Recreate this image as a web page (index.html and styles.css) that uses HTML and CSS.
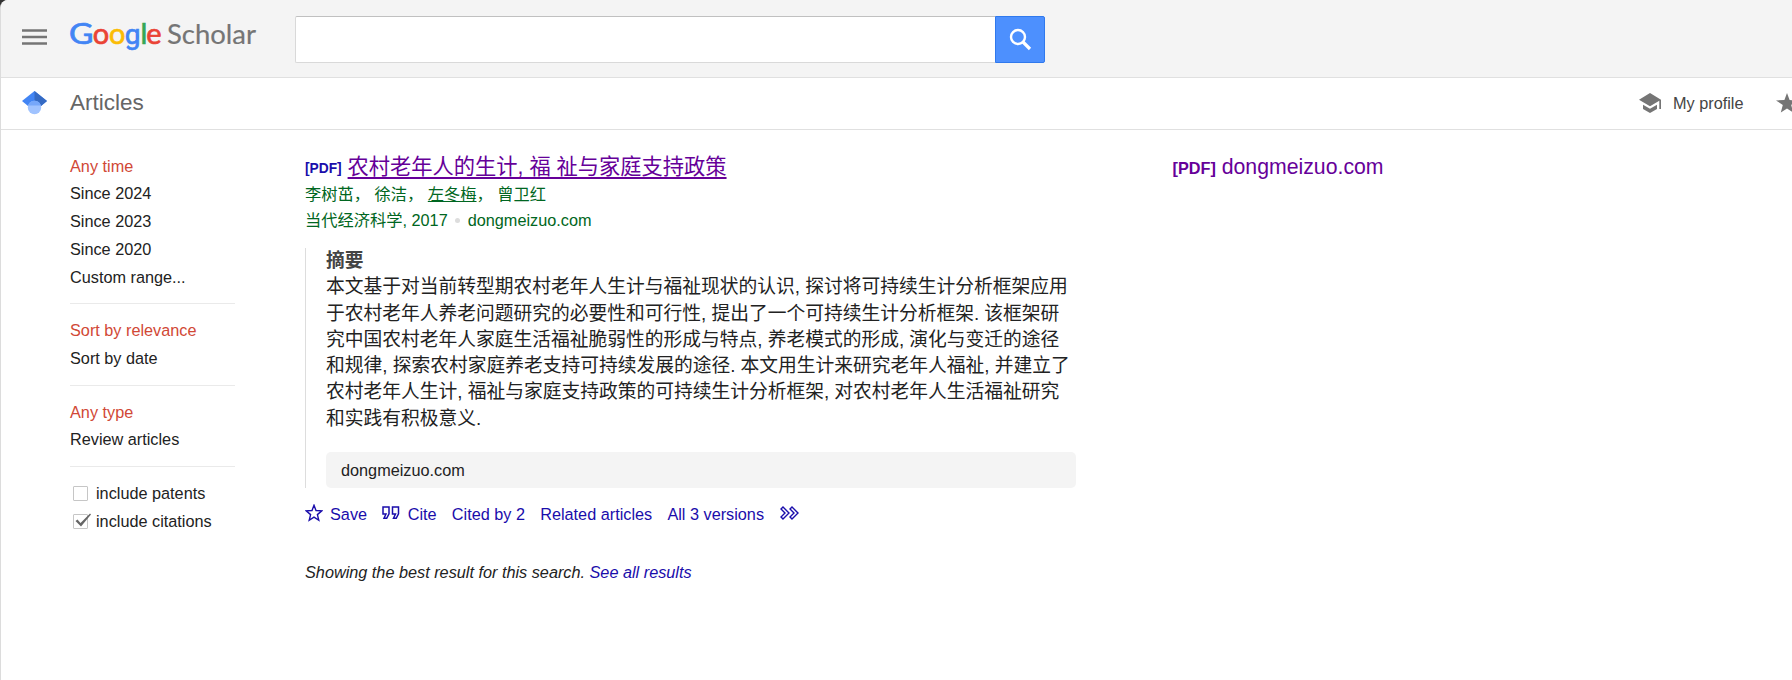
FILE: index.html
```html
<!DOCTYPE html>
<html lang="en">
<head>
<meta charset="utf-8">
<title>Google Scholar</title>
<link rel="stylesheet" href="styles.css">
</head>
<body>
<div class="page">
  <header class="top">
    <svg class="menu" width="25" height="17" viewBox="0 0 25 17"><path d="M0 1.500h25M0 8h25M0 14.500h25" stroke="#757575" stroke-width="2.500"/></svg>
    <svg class="logo" width="192" height="40" viewBox="0 0 192 40">
      <g class="google">
        <text x="-1" y="30" textLength="24.500" lengthAdjust="spacingAndGlyphs" fill="#4285f4" stroke="#4285f4">G</text>
        <text x="22.700" y="30" fill="#ea4335" stroke="#ea4335">o</text>
        <text x="39" y="30" fill="#fbbc05" stroke="#fbbc05">o</text>
        <text class="tail" x="54.800" y="30" fill="#4285f4" stroke="#4285f4">g</text>
        <text x="70.500" y="30" fill="#34a853" stroke="#34a853">l</text>
        <text x="76.300" y="30" fill="#ea4335" stroke="#ea4335">e</text>
      </g>
      <text class="scholar" x="97" y="30" textLength="89" lengthAdjust="spacingAndGlyphs">Scholar</text>
    </svg>
    <form class="search">
      <input class="query" type="text" aria-label="Search">
      <button class="go" type="button" aria-label="Search"><svg width="24" height="24" viewBox="0 0 24 24" fill="none" stroke="#fff"><circle cx="9" cy="9" r="7" stroke-width="2.400"/><path d="M14 14l7 7" stroke-width="3.200"/></svg></button>
    </form>
  </header>
  <nav class="bar">
    <svg class="cap" width="25" height="24" viewBox="0 0 25 24"><path d="M12.500 0L0 10l6 5h13l6-5z" fill="#4285f4"/><path d="M12.500 0L25 10l-6 5-6.500-4z" fill="#356ac3"/><circle cx="12.500" cy="16.500" r="6.700" fill="#a0c3ff"/><path d="M6.100 14.500a6.700 6.700 0 0 1 12.800 0z" fill="#76a7fa"/></svg>
    <h1 class="section">Articles</h1>
    <a class="profile"><svg width="23" height="20" viewBox="0 0 23 20" fill="#757575"><path d="M11 0L0 6.800l11 6.400 9.300-5.400V16H22V6.800z"/><path d="M4 11.700v4.300l7 4 7-4v-4.300l-7 4z"/></svg><span>My profile</span></a>
    <svg class="library" width="24" height="22" viewBox="0 0 24 22"><path d="M11 0l2.600 7 7.400.400-5.800 4.600 2 7.500L11 15.500 4.800 19.500l2-7.500L0 7.400 8.400 7z" fill="#757575"/></svg>
  </nav>
  <div class="body">
    <aside class="filters">
      <ul class="group"><li class="on">Any time</li><li>Since 2024</li><li>Since 2023</li><li>Since 2020</li><li>Custom range...</li></ul>
      <ul class="group"><li class="on">Sort by relevance</li><li>Sort by date</li></ul>
      <ul class="group"><li class="on">Any type</li><li>Review articles</li></ul>
      <ul class="group">
        <li class="check"><span class="box"></span>include patents</li>
        <li class="check"><span class="box"><svg class="tick" width="18" height="15" viewBox="0 0 18 15"><path d="M1.500 8l2-1.500 3 3.500L16 .5l1 1L7 13.500z" fill="#666"/></svg></span>include citations</li>
      </ul>
    </aside>
    <main class="result">
      <h3 class="title"><span class="tag">[PDF]</span> <a class="name">农村老年人的生计, 福 祉与家庭支持政策</a></h3>
      <div class="meta">李树茁， 徐洁， <u>左冬梅</u>， 曾卫红</div>
      <div class="meta">当代经济科学, 2017 <span class="dot"></span> dongmeizuo.com</div>
      <div class="abstract">
        <h4>摘要</h4>
        <p>本文基于对当前转型期农村老年人生计与福祉现状的认识, 探讨将可持续生计分析框架应用<br>于农村老年人养老问题研究的必要性和可行性, 提出了一个可持续生计分析框架. 该框架研<br>究中国农村老年人家庭生活福祉脆弱性的形成与特点, 养老模式的形成, 演化与变迁的途径<br>和规律, 探索农村家庭养老支持可持续发展的途径. 本文用生计来研究老年人福祉, 并建立了<br>农村老年人生计, 福祉与家庭支持政策的可持续生计分析框架, 对农村老年人生活福祉研究<br>和实践有积极意义.</p>
        <div class="source">dongmeizuo.com</div>
      </div>
      <div class="actions">
        <a class="save"><svg width="18" height="18" viewBox="0 0 18 18" fill="none" stroke="#1a0dab" stroke-width="1.400"><path d="M9 1.300l2 5.200 5.800.400-4.400 3.700 1.400 5.700L9 13.200 4.200 16.300l1.400-5.700L1.200 6.900 7 6.500z"/></svg>Save</a>
        <a class="cite"><svg width="18" height="14" viewBox="0 0 18 14" fill="none" stroke="#1a0dab" stroke-width="1.500"><path d="M1 1h6v6.800L4.700 12.300H2L4 8H1zM10.500 1h6v6.800l-2.300 4.500h-2.700l2-4.300h-3z"/></svg>Cite</a>
        <a>Cited by 2</a><a>Related articles</a><a>All 3 versions</a>
        <svg class="more" width="19" height="14" viewBox="0 0 19 14" fill="none" stroke="#1a0dab" stroke-width="1.400"><path d="M1 3l2-2 6 6-6 6-2-2 4-4zM10 3l2-2 6 6-6 6-2-2 4-4z"/></svg>
      </div>
      <p class="best">Showing the best result for this search. <a>See all results</a></p>
    </main>
    <div class="pdf"><span class="pdftag">[PDF]</span> dongmeizuo.com</div>
  </div>
</div>
</body>
</html>
```
FILE: styles.css
```css
* { box-sizing: border-box; }
html { background: #333; }
body {
  margin: 0;
  overflow: hidden;
  font: 16.25px/1.24 "Liberation Sans", Arial, "Noto Sans CJK SC", sans-serif;
  color: #222;
}
h1, h3, h4, p, ul { margin: 0; padding: 0; font-weight: normal; }
svg { display: block; flex: none; }
.page {
  height: 680px;
  overflow: hidden;
  background: #fff;
  border-left: 1px solid #dcdcdc;
  border-top-left-radius: 8px;
}
.top {
  display: flex;
  height: 78px;
  background: #f4f4f4;
  border-bottom: 1px solid #e0e0e0;
}
.menu { margin: 29px 0 0 21px; }
.logo { margin: 14px 0 0 23px; overflow: visible; }
.google { font: 29px Lato, sans-serif; stroke-width: 0.7px; }
.google .tail { font: 28px Roboto, sans-serif; }
.scholar { font: 27px Lato, sans-serif; fill: #757575; stroke: #757575; stroke-width: 0.2px; }
.search { display: flex; margin: 16px 0 0 33px; height: 47px; }
.query {
  width: 700px;
  border: 1px solid #d9d9d9;
  border-top-color: #c0c0c0;
  border-right: 0;
  border-radius: 2px 0 0 2px;
  background: #fff;
}
.go {
  display: flex;
  width: 50px;
  padding: 11px 0 0 13px;
  border: 1px solid #3079ed;
  border-radius: 0 2px 2px 0;
  background: #4d90fe;
}
.bar {
  display: flex;
  height: 52px;
  border-bottom: 1px solid #e0e0e0;
}
.cap { margin: 13px 0 0 21px; }
.section {
  width: 1569px;
  flex: none;
  margin: 12px 0 0 23px;
  font-size: 22.5px;
  line-height: 26px;
  color: #666;
}
.profile { display: flex; flex: none; width: 137px; color: #444; }
.profile svg { margin: 15px 11px 0 0; }
.profile span { margin-top: 15px; }
.library { margin-top: 15px; }
.body { display: flex; }
.filters { width: 165px; margin: 22.5px 0 0 69px; flex: none; }
.group { list-style: none; }
.group + .group { margin-top: 12px; padding-top: 12.8px; border-top: 1px solid #eaeaea; }
.group li { height: 27.8px; line-height: 27.8px; }
.group .on { color: #d14836; }
.group .check { display: flex; align-items: center; }
.box { width: 15px; height: 15px; margin: 0 8px 0 3px; border: 1px solid #c6c6c6; border-radius: 1px; }
.tick { position: absolute; margin: -2px 0 0; }
.result { width: 771px; margin: 22px 0 0 70px; flex: none; }
.title { height: 29px; line-height: 30px; font-size: 21.25px; white-space: nowrap; }
.tag { font-size: 13.75px; font-weight: bold; color: #1a0dab; position: relative; top: -1px; }
.name { color: #609; text-decoration: underline; text-decoration-thickness: 1.5px; text-underline-offset: 3px; }
.meta { height: 26px; line-height: 26px; color: #006621; white-space: nowrap; }
.dot { display: inline-block; width: 5px; height: 5px; margin: 0 3px; border-radius: 50%; background: #ddd; vertical-align: 3px; }
.abstract { margin-top: 15px; padding: 0 0 0 20px; border-left: 1px solid #ddd; height: 240px; font-size: 18.75px; line-height: 26.3px; }
.abstract h4 { font-size: 18.75px; font-weight: bold; color: #444; }
.abstract p { white-space: nowrap; }
.source { width: 750px; height: 36px; margin-top: 20px; padding-left: 15px; border-radius: 5px; background: #f4f4f4; font-size: 16.25px; line-height: 36px; }
.actions { display: flex; margin-top: 16px; height: 20px; gap: 15.2px; color: #1a0dab; white-space: nowrap; }
.actions a { display: flex; }
.save svg { margin-right: 7px; }
.cite svg { margin: 2px 7.5px 0 0; }
.more { margin: 2px 0 0 1px; }
.best { margin-top: 38px; font-style: italic; }
.best a { color: #1a0dab; }
.pdf { margin: 25px 0 0 96.5px; font-size: 21.25px; line-height: 24px; color: #609; white-space: nowrap; }
.pdftag { font-size: 16.25px; font-weight: bold; }
```
